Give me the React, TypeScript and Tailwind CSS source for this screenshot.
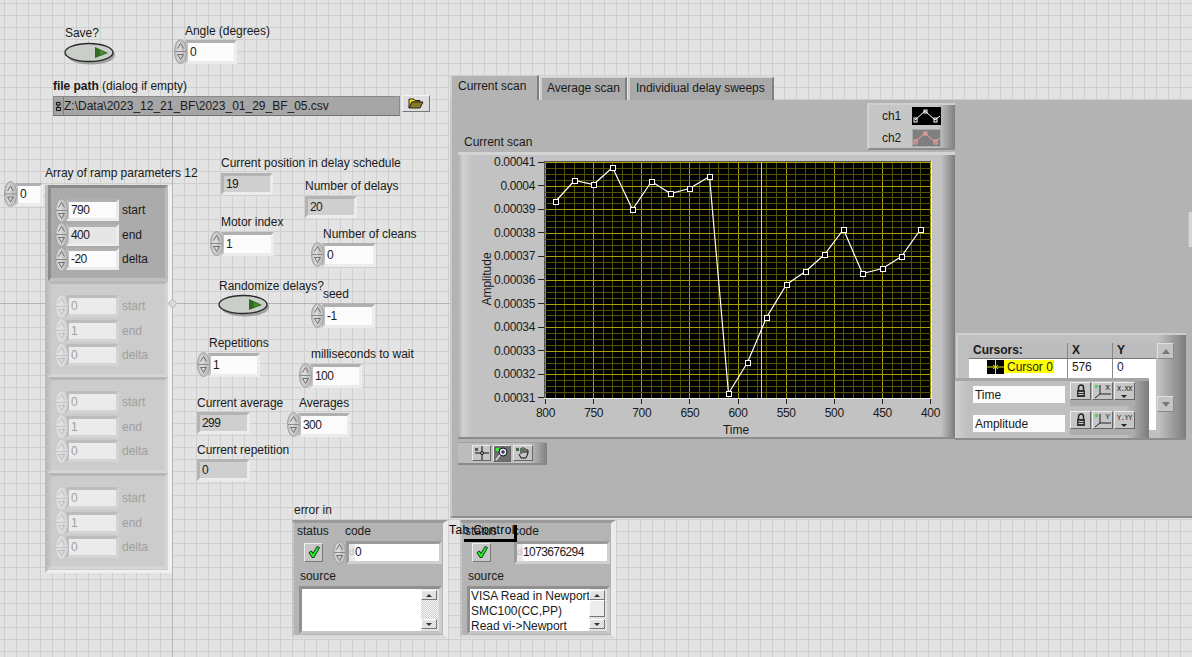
import React from "react";

const F = "font-['Liberation_Sans',sans-serif] text-[12px] leading-[14px] tracking-[-0.03px] text-[#1a1a1a] whitespace-nowrap";
const N = "font-['Liberation_Sans',sans-serif] text-[12px] leading-[14px] tracking-[-0.6px] text-[#1a1a1a] whitespace-nowrap";

/* The front panel is a free canvas: only whole controls are placed on it. */
function At({ x, y, w, h, className = "", children }: { x: number; y: number; w?: number; h?: number; className?: string; children?: React.ReactNode }) {
  return <div className={"absolute " + className} style={{ left: x, top: y, width: w, height: h }}>{children}</div>;
}

function T({ x, y, children, className = "" }: { x: number; y: number; children: React.ReactNode; className?: string }) {
  return <At x={x} y={y} className={F + " " + className}>{children}</At>;
}

function Spin({ h = 25, dim = false }: { h?: number; dim?: boolean }) {
  const s = dim ? "#bcbcbc" : "#6e6e6e";
  const m = h / 2;
  return (
    <svg width="13" height={h} viewBox={`0 0 13 ${h}`} className="shrink-0 relative z-10 -mr-[2px]">
      <ellipse cx="6.5" cy={m} rx="6" ry={m - 0.5} fill={dim ? "#dadada" : "#c4c4c4"} stroke={dim ? "#cacaca" : "#a0a0a0"} />
      <ellipse cx="5" cy={m} rx="2.5" ry={m - 3} fill={dim ? "#e2e2e2" : "#d8d8d8"} />
      <line x1="1" y1={m} x2="12" y2={m} stroke={dim ? "#c6c6c6" : "#8a8a8a"} />
      <path d={`M3.5 ${m - 3} L6.5 ${m - 8} L9.5 ${m - 3}`} stroke={s} fill="none" />
      <path d={`M3.5 ${m + 3} H9.5 L6.5 ${m + 8} Z`} stroke={s} fill="none" />
    </svg>
  );
}

type Kind = "ctrl" | "ind" | "dim" | "alt";
function Box({ w, v, kind = "ctrl", h = 24 }: { w: number; v: string; kind?: Kind; h?: number }) {
  const bg = kind === "ctrl" ? "bg-[#fbfbfb]" : kind === "ind" ? "bg-[#cfcfcf]" : kind === "alt" ? "bg-[#e6e6e6]" : "bg-[#ebebeb]";
  const fr = kind === "dim"
    ? "border-t-[#bdbdbd] border-l-[#bdbdbd] border-r-[#d4d4d4] border-b-[#d4d4d4]"
    : kind === "ind"
      ? "border-t-[#b4b4b4] border-l-[#b4b4b4] border-r-[#ececec] border-b-[#ececec]"
      : "border-t-[#b0b0b0] border-l-[#c0c0c0] border-r-[#ececec] border-b-[#ececec]";
  return (
    <div className={"border-[3px] box-border flex items-center pl-[2px] shrink-0 " + fr + " " + bg} style={{ width: w, height: h }}>
      <span className={N + (kind === "dim" ? " !text-[#a2a2a2]" : "")}>{v}</span>
    </div>
  );
}

/* label above, optional spinner + value box below */
function Ctrl({ x, y, label, dx = 0, gap = 1, v, w = 52, h = 24, spin = true, kind = "ctrl" }: { x: number; y: number; label: string; dx?: number; gap?: number; v: string; w?: number; h?: number; spin?: boolean; kind?: Kind }) {
  return (
    <At x={x} y={y} className="flex flex-col">
      <span className={F} style={{ marginLeft: dx, marginBottom: gap }}>{label}</span>
      <div className="flex items-center">
        {spin && <Spin />}
        <Box w={w} v={v} kind={kind} h={h} />
      </div>
    </At>
  );
}

function Toggle({ x, y }: { x: number; y: number }) {
  return (
    <At x={x} y={y} w={52} h={24}>
      <svg width="52" height="24" viewBox="0 0 52 24">
        <ellipse cx="27" cy="13" rx="24" ry="9.5" fill="#8a8a8a" opacity="0.75" />
        <ellipse cx="25" cy="10.5" rx="24" ry="9" fill="#c9cec9" stroke="#2a2a2a" strokeWidth="1.3" />
        <path d="M31 5 L44 11 L31 16 Z" fill="#2f6b20" />
        <path d="M36 8 L41 11 L36 13 Z" fill="#4d8a35" />
      </svg>
    </At>
  );
}

function Cluster({ vals, dim, first }: { vals: string[]; dim: boolean; first?: boolean }) {
  const names = ["start", "end", "delta"];
  const cls = first
    ? "h-[96px] bg-[#ababab] border-t-[#8c8c8c] border-l-[#8c8c8c] border-r-[#bcbcbc] border-b-[#c0c0c0]"
    : "h-[96px] bg-[#cccccc] border-t-[#b8b8b8] border-l-[#c2c2c2] border-r-[#d6d6d6] border-b-[#d6d6d6]";
  return (
    <div className={"border-[3px] box-border flex flex-col pl-[4px] pt-[10px] " + cls}>
      {vals.map((v, i) => (
        <div key={i} className="flex items-center h-[24.5px]">
          <Spin dim={dim} />
          <div className="w-[53px]"><Box w={53} h={22} v={v} kind={dim ? "dim" : i === 1 ? "alt" : "ctrl"} /></div>
          <span className={F + " ml-[3px]" + (dim ? " !text-[#a0a0a0]" : "")}>{names[i]}</span>
        </div>
      ))}
    </div>
  );
}

const pts: [number, number][] = [[555,201],[574,180],[593,184],[612,167],[632,209],[651,181],[670,193],[689,188],[709,176],[728,393],[747,362],[766,317],[786,284],[805,271],[824,254],[843,229],[862,273],[882,268],[901,256],[920,229]];

function Plot() {
  const L = 544, Tp = 161, W = 388, H = 238;
  const v: React.ReactNode[] = [];
  const h: React.ReactNode[] = [];
  for (let i = 0; i <= 40; i++) {
    const x = Math.round(1 + i * 9.625) + 0.5;
    v.push(<line key={"v" + i} x1={x} x2={x} y1={0} y2={H} stroke={i % 5 === 0 ? "#a8a000" : "#565300"} />);
    const y = Math.round(1 + i * 5.9) + 0.5;
    h.push(<line key={"h" + i} x1={0} x2={W} y1={y} y2={y} stroke={i % 4 === 0 ? "#a8a000" : "#565300"} />);
  }
  return (
    <At x={L} y={Tp} w={W} h={H} className="bg-black">
      <svg width={W} height={H} viewBox={`0 0 ${W} ${H}`} className="block">
        <g shapeRendering="crispEdges">
          {v}
          {h}
          <line x1={217.5} x2={217.5} y1={0} y2={H} stroke="#f0e000" />
          <line x1={0} x2={W} y1={0.5} y2={0.5} stroke="#555" />
          <line x1={0.5} x2={0.5} y1={0} y2={H} stroke="#555" />
          <line x1={W - 0.5} x2={W - 0.5} y1={0} y2={H} stroke="#ededed" />
          <line x1={0} x2={W} y1={H - 0.5} y2={H - 0.5} stroke="#ededed" />
        </g>
        <polyline fill="none" stroke="#fff" strokeWidth="1.2" points={pts.map(([a, b]) => `${a - L + 0.5},${b - Tp + 0.5}`).join(" ")} />
        <g shapeRendering="crispEdges">
          {pts.map(([a, b], i) => (
            <rect key={i} x={a - L - 2} y={b - Tp - 2} width="5" height="5" fill="#000" stroke="#fff" />
          ))}
        </g>
      </svg>
    </At>
  );
}

const yl = ["0.00041","0.0004","0.00039","0.00038","0.00037","0.00036","0.00035","0.00034","0.00033","0.00032","0.00031"];
const xl = ["800","750","700","650","600","550","500","450","400"];
const AX = "font-['Liberation_Sans',sans-serif] text-[12px] leading-[14px] tracking-[-0.35px] text-[#1a1a1a]";

function Axis() {
  return (
    <>
      <At x={490} y={155} w={54} h={250} className="flex flex-col justify-between">
        {yl.map((t) => (
          <div key={t} className="flex items-center justify-end h-[14px]">
            <span className={AX}>{t}</span>
            <span className="w-[6px] h-[1px] bg-[#222] ml-[3px]" />
          </div>
        ))}
      </At>
      <At x={530.5} y={399} w={415} className="flex justify-between">
        {xl.map((t) => (
          <div key={t} className="w-[30px] flex flex-col items-center">
            <span className="w-[1px] h-[5px] bg-[#222]" />
            <span className={AX + " mt-[2px]"}>{t}</span>
          </div>
        ))}
      </At>
      <T x={723} y={423}>Time</T>
      <At x={457} y={272} w={60} className={F + " text-center -rotate-90"}>Amplitude</At>
    </>
  );
}

function Check() {
  return (
    <div className="w-[19px] h-[19px] shrink-0 bg-[#c8c8c8] border border-t-[#ededed] border-l-[#ededed] border-r-[#7a7a7a] border-b-[#7a7a7a] box-border flex items-center justify-center">
      <svg width="14" height="14" viewBox="0 0 14 14">
        <path d="M2 7.5 L5 12.5 H7 L12.5 2.5 L10 1.5 L6 8.5 L4.5 6 Z" fill="#22ee22" stroke="#0a2a0a" strokeWidth="0.9" />
      </svg>
    </div>
  );
}

function Scroll({ thumb }: { thumb: boolean }) {
  const b = "w-[16px] bg-[#e2e2e2] border border-t-white border-l-white border-r-[#777] border-b-[#777] box-border flex items-center justify-center";
  return (
    <div className="w-[18px] h-[42px] pt-[1px] pb-[2px] flex flex-col justify-between bg-[repeating-conic-gradient(#cfcfcf_0_25%,#f6f6f6_0_50%)] bg-[length:2px_2px] shrink-0">
      <div className="flex flex-col">
        <div className={b + " h-[10px]"}><span className="border-x-[3px] border-x-transparent border-b-[3px] border-b-[#333]" /></div>
        {thumb && <div className={b + " h-[17px] !bg-[#ececec]"} />}
      </div>
      <div className={b + " h-[10px]"}><span className="border-x-[3px] border-x-transparent border-t-[3px] border-t-[#333]" /></div>
    </div>
  );
}

function ErrCluster({ x, code, spin, source }: { x: number; code: string; spin: boolean; source?: React.ReactNode }) {
  return (
    <At x={x} y={520} w={156} h={118} className="bg-[#b4b4b4] border-t-[3px] border-l-[2px] border-r-[5px] border-b-[3px] box-border border-t-[#9a9a9a] border-l-[#c4c4c4] border-r-[#ececec] border-b-[#dadada] px-[3px] pt-[1px] flex flex-col">
      <div className="flex h-[17px] shrink-0">
        <span className={F + " w-[48px]"}>status</span>
        <span className={F}>code</span>
      </div>
      <div className="flex items-center h-[22px] pl-[7px] shrink-0">
        <Check />
        <div className="flex items-center ml-[10px]">
          <div className="w-[13px] shrink-0">{spin && <Spin h={23} />}</div>
          <div className="h-[23px] w-[96px] border-[3px] box-border border-t-[#9a9a9a] border-l-[#9a9a9a] border-r-[#d0d0d0] border-b-[#d0d0d0] bg-white flex items-center shrink-0">
            <span className="w-[6px] shrink-0 bg-[#e8e8e8] h-full text-[#bdbdbd] text-[9px] leading-[17px] font-['Liberation_Sans',sans-serif]">d</span>
            <span className={N}>{code}</span>
          </div>
        </div>
      </div>
      <span className={F + " mt-[6px] ml-[3px] h-[17px] shrink-0"}>source</span>
      <div className="ml-[2px] -mr-[2px] flex bg-white border-[3px] box-border border-t-[#909090] border-l-[#909090] border-r-[#cfcfcf] border-b-[#c4c4c4] h-[48px] shrink-0 overflow-hidden">
        <div className={F + " flex-1 leading-[15px] overflow-hidden pl-[1px]"}>{source}</div>
        <Scroll thumb={!!source} />
      </div>
    </At>
  );
}

function Btn({ w = 21, h = 18, children, dark, className = "" }: { w?: number; h?: number; children?: React.ReactNode; dark?: boolean; className?: string }) {
  return (
    <div className={(dark ? "bg-[#6e6e6e] " : "bg-[#c6c6c6] ") + "relative border border-t-[#ececec] border-l-[#ececec] border-r-[#666] border-b-[#666] box-border flex items-center justify-center shrink-0 " + className} style={{ width: w, height: h }}>
      {children}
    </div>
  );
}

const Led = ({ on }: { on?: boolean }) => (
  <span className={"absolute left-[2px] top-[2px] w-[3px] h-[3px] " + (on ? "bg-[#33ee33]" : "bg-[#3f6b3f]")} />
);

const Lock = () => (
  <svg width="12" height="14" viewBox="0 0 12 14">
    <path d="M3.5 6 V3.5 A2.5 2.5 0 0 1 8.5 3.5 V6" fill="none" stroke="#222" strokeWidth="1.5" />
    <rect x="2" y="6" width="8" height="7" fill="#333" />
    <rect x="3.5" y="8" width="5" height="1" fill="#ccc" />
    <rect x="3.5" y="10" width="5" height="1" fill="#ccc" />
  </svg>
);

function ScaleRow({ name, axis, fmt }: { name: string; axis: string; fmt: string }) {
  return (
    <div className="flex items-start h-[29px] shrink-0">
      <div className="w-[92px] h-[17px] mt-[4px] bg-[#fbfbfb] flex items-center pl-[2px]"><span className={F}>{name}</span></div>
      <div className="flex gap-[1px] ml-[5px] bg-[#adadad] h-[24px]">
        <Btn><Lock /></Btn>
        <Btn>
          <Led on />
          <svg width="19" height="16" viewBox="0 0 19 16" className="absolute left-0 top-0">
            <path d="M7 2 V11 H18 M7 11 L2 15" fill="none" stroke="#222" />
          </svg>
          <span className="absolute right-[2px] top-0 font-['Liberation_Mono',monospace] text-[8px] leading-[10px] text-[#222]">{axis}</span>
        </Btn>
        <Btn>
          <span className="font-['Liberation_Mono',monospace] text-[7px] leading-[10px] tracking-[-0.4px] text-[#222] -mt-[5px]">{fmt}</span>
          <span className="absolute left-[6px] bottom-[1px] border-x-[3px] border-x-transparent border-t-[3px] border-t-[#222]" />
        </Btn>
      </div>
    </div>
  );
}

const tabBase = "border-l-[2px] border-t-[1px] border-r-[2px] box-border flex items-center border-l-[#cfcfcf] border-t-[#cfcfcf] border-r-[#808080] " + F;

export default function App() {
  return (
    <div className="relative w-[1192px] h-[657px] overflow-hidden bg-[#e3e3e3] bg-[linear-gradient(#cfcfcf_1px,transparent_1px),linear-gradient(90deg,#cfcfcf_1px,transparent_1px)] bg-[length:12px_12px] bg-[position:4px_3px]">
      <At x={172} y={0} w={1} h={657} className="bg-[#b4b4b4]" />
      <At x={0} y={303} w={450} h={1} className="bg-[#b4b4b4]" />

      <T x={65} y={26}>Save?</T>
      <Toggle x={64} y={42} />
      <Ctrl x={174} y={24} dx={11} label="Angle (degrees)" v="0" />

      {/* file path */}
      <At x={53} y={79} className="flex flex-col">
        <span className={F + " mb-[3px]"}><b className="font-bold">file path</b> (dialog if empty)</span>
        <div className="flex items-start">
          <div className="w-[347px] h-[20px] bg-[#a6a6a6] border border-[#8a8a8a] border-b-[#707070] box-border flex items-center">
            <svg width="9" height="12" viewBox="0 0 9 12" className="shrink-0 bg-[#9e9e9e]">
              <path d="M2.5 2.5 H6 V5 H2.5 Z M4 5 V7.5 M2.5 7.5 H6.5 V10.5 H2.5 Z" fill="none" stroke="#111" />
            </svg>
            <span className={N + " !tracking-[0px] border-l border-[#808080] h-full leading-[18px]"}>Z:\Data\2023_12_21_BF\2023_01_29_BF_05.csv</span>
          </div>
          <div className="ml-[2px] -mt-[1px] w-[28px] h-[17px] bg-[#dedede] border border-t-[#f4f4f4] border-l-[#f4f4f4] border-r-[#777] border-b-[#777] box-border flex items-center justify-center">
            <svg width="16" height="11" viewBox="0 0 16 11">
              <path d="M1 1 H6 L7 2.5 H12 V4 H4 L1 10 Z" fill="#f0e000" stroke="#222" />
              <path d="M4 4 H15 L12 10 H1 Z" fill="#8a7a20" stroke="#222" />
            </svg>
          </div>
        </div>
      </At>

      {/* array */}
      <T x={45} y={166}>Array of ramp parameters 12</T>
      <At x={4} y={181} className="flex items-center">
        <Spin h={26} />
        <Box w={28} h={23} v="0" />
      </At>
      <At x={45} y={185} w={127} h={388} className="bg-[#cccccc] border-l-[3px] border-r-[4px] border-b-[3px] box-border border-l-[#bcbcbc] border-r-[#f0f0f0] border-b-[#f0f0f0] flex flex-col">
        <Cluster first vals={["790", "400", "-20"]} dim={false} />
        <Cluster vals={["0", "1", "0"]} dim />
        <Cluster vals={["0", "1", "0"]} dim />
        <Cluster vals={["0", "1", "0"]} dim />
      </At>
      <At x={169} y={300} w={7} h={7} className="rotate-45 bg-[#dcdcdc] border border-[#bdbdbd]" />

      {/* scattered controls */}
      <Ctrl x={221} y={156} label="Current position in delay schedule" v="19" spin={false} kind="ind" w={52} h={22} gap={3} />
      <Ctrl x={305} y={179} label="Number of delays" v="20" spin={false} kind="ind" w={52} h={22} gap={3} />
      <Ctrl x={210} y={215} dx={11} label="Motor index" v="1" w={53} gap={2} />
      <Ctrl x={311} y={227} dx={12} label="Number of cleans" v="0" w={54} />
      <T x={219} y={279}>Randomize delays?</T>
      <Toggle x={218} y={294} />
      <Ctrl x={311} y={287} dx={12} label="seed" v="-1" w={53} gap={2} />
      <Ctrl x={197} y={336} dx={12} label="Repetitions" v="1" w={52} gap={2} />
      <Ctrl x={299} y={347} dx={12} label="milliseconds to wait" v="100" w={52} gap={2} />
      <Ctrl x={197} y={396} label="Current average" v="299" spin={false} kind="ind" w={53} h={22} gap={2} />
      <Ctrl x={287} y={396} dx={12} label="Averages" v="300" w={52} gap={2} />
      <Ctrl x={197} y={443} label="Current repetition" v="0" spin={false} kind="ind" w={53} h={22} gap={2} />

      {/* tab control */}
      <At x={450} y={75} w={742} className="flex flex-col">
        <div className="flex items-end h-[25px] -mb-[1px] relative z-10">
          <div className={tabBase + " h-[25px] w-[89px] bg-[#b3b3b3] pl-[6px] pb-[5px] !border-r-[#808080]"}>Current scan</div>
          <div className={tabBase + " h-[23px] w-[87px] ml-[1px] bg-[#a9a9a9] pl-[5px] pb-[2px]"}>Average scan</div>
          <div className={tabBase + " h-[23px] w-[146px] ml-[1px] bg-[#a9a9a9] pl-[6px] pb-[2px]"}>Individiual delay sweeps</div>
        </div>
        <div className="h-[419px] bg-[#b3b3b3] border-l-[2px] border-t-[1px] border-b-[2px] box-border border-l-[#c8c8c8] border-t-[#cdcdcd] border-b-[#8f8f8f]" />
      </At>

      <T x={464} y={135}>Current scan</T>

      {/* graph */}
      <At x={458} y={152} w={497} h={287} className="border-t-[3px] border-t-[#d4d4d4] border-b-[2px] border-b-[#8c8c8c] box-border bg-[#c2c2c2] bg-[linear-gradient(90deg,#b0b0b0_0,#d2d2d2_5px,#c2c2c2_14px,#c2c2c2_calc(100%-14px),#7c7c7c_100%)]" />
      <Plot />
      <Axis />

      {/* plot legend */}
      <At x={867} y={103} w={88} h={47} className="grid grid-cols-[1fr_29px] grid-rows-2 items-center gap-y-[3px] pl-[13px] pr-[14px] py-[1px] box-border border-t-[2px] border-t-[#d0d0d0] border-b-[2px] border-b-[#8c8c8c] border-l-[2px] border-l-[#d2d2d2] bg-[linear-gradient(90deg,#c6c6c6,#c6c6c6_80%,#808080)]">
        <span className={F}>ch1</span>
        <div className="w-[29px] h-[18px] bg-black">
          <svg width="29" height="18" className="block"><polyline points="3,13 13,4 23,13 28,9" fill="none" stroke="#fff" /><rect x="2" y="11" width="3" height="4" fill="none" stroke="#fff" /><rect x="12" y="3" width="3" height="3" fill="none" stroke="#fff" /><rect x="22" y="11" width="3" height="4" fill="none" stroke="#fff" /></svg>
        </div>
        <span className={F}>ch2</span>
        <div className="w-[29px] h-[18px] bg-[#7f7f7f] border border-[#aaa] box-border">
          <svg width="27" height="16" className="block"><polyline points="2,12 12,3 22,12 27,8" fill="none" stroke="#f0a0a0" /><rect x="1" y="10" width="3" height="4" fill="none" stroke="#f0a0a0" /><rect x="11" y="2" width="3" height="3" fill="none" stroke="#f0a0a0" /><rect x="21" y="10" width="3" height="4" fill="none" stroke="#f0a0a0" /></svg>
        </div>
      </At>

      {/* graph palette */}
      <At x={458} y={442} w={89} h={23} className="flex items-start gap-[2px] pl-[14px] pt-[2px] box-border bg-[linear-gradient(90deg,#bcbcbc,#c2c2c2_80%,#808080)] border-b-[2px] border-b-[#8a8a8a] border-t-[1px] border-t-[#a0a0a0]">
        <Btn w={19} h={16}><Led /><svg width="16" height="14"><path d="M8 0 V14 M1 7 H15" stroke="#111" /><circle cx="8" cy="7" r="1.5" fill="#c6c6c6" stroke="#111" /></svg></Btn>
        <Btn w={18} h={17} dark><Led on /><svg width="16" height="14"><circle cx="9" cy="5" r="4" fill="#dfe0ff" stroke="#111" /><path d="M7 5 H11 M9 3 V7" stroke="#111" /><path d="M6 8 L2 13" stroke="#ddd" strokeWidth="1.5" /></svg></Btn>
        <Btn w={20} h={16}><Led /><svg width="14" height="14"><path d="M3 8 L5 12 H10 L12 7 V4 M5 8 V2 M7 7 V1 M9 7 V2 M11 7 V3" fill="none" stroke="#111" /></svg></Btn>
      </At>

      <At x={1188} y={212} w={4} h={35} className="bg-[#d6d6d6] border-l border-[#c0c0c0]" />

      {/* cursor legend */}
      <At x={956} y={333} w={230} h={107} className="pl-[11px] pt-[8px] box-border border-t-[2px] border-t-[#cfcfcf] border-l-[2px] border-l-[#cfcfcf] border-b-[2px] border-b-[#8c8c8c] bg-[linear-gradient(90deg,#c0c0c0,#c0c0c0_88%,#7c7c7c)]">
        <div className="flex">
          <div className="w-[187px] flex flex-col">
            <div className="grid grid-cols-[98px_45px_44px] h-[16px] bg-[#bcbcbc] border-b border-[#777]">
              <span className={F + " font-bold pl-[4px]"}>Cursors:</span>
              <span className={F + " font-bold pl-[4px] border-l border-[#888]"}>X</span>
              <span className={F + " font-bold pl-[4px] border-l border-[#888]"}>Y</span>
            </div>
            <div className="grid grid-cols-[98px_45px_44px] h-[71px] bg-white">
              <div className="flex items-start pt-[1px] pl-[18px] h-[15px]">
                <span className="w-[17px] h-[14px] bg-black flex items-center justify-center shrink-0">
                  <svg width="17" height="14"><path d="M0 7 H17 M8.5 0 V14" stroke="#e8e800" /><path d="M6 5 L11 9 M11 5 L6 9" stroke="#e8e800" /></svg>
                </span>
                <span className={F + " bg-[#ffff00] h-[13px] leading-[13px] pl-[3px] pr-[1px]"}>Cursor 0</span>
              </div>
              <span className={N + " border-l border-[#888] pl-[4px] !tracking-[-0.2px] pt-[1px]"}>576</span>
              <span className={N + " border-l border-[#888] pl-[4px] pt-[1px]"}>0</span>
            </div>
          </div>
          <div className="w-[17px] ml-[1px] h-[70px] flex flex-col justify-between">
            <div className="h-[16px] bg-[#c4c4c4] border border-t-[#dedede] border-l-[#dedede] border-r-[#888] border-b-[#888] box-border flex items-center justify-center"><span className="border-x-[4px] border-x-transparent border-b-[5px] border-b-[#777]" /></div>
            <div className="h-[16px] mb-[1px] bg-[#c4c4c4] border border-t-[#dedede] border-l-[#dedede] border-r-[#888] border-b-[#888] box-border flex items-center justify-center"><span className="border-x-[4px] border-x-transparent border-t-[5px] border-t-[#777]" /></div>
          </div>
        </div>
      </At>
      <At x={955} y={378} w={194} h={62} className="pl-[18px] pt-[1px] box-border border-t-[3px] border-t-[#a6a6a6] border-b-[2px] border-b-[#8c8c8c] bg-[linear-gradient(90deg,#d0d0d0,#bfbfbf_12px,#bfbfbf_88%,#7c7c7c)] flex flex-col overflow-hidden">
        <ScaleRow name="Time" axis="X" fmt="X.XX" />
        <ScaleRow name="Amplitude" axis="Y" fmt="Y.YY" />
      </At>

      {/* error clusters */}
      <T x={294} y={503}>error in</T>
      <ErrCluster x={292} code="0" spin />
      <ErrCluster x={460} code="1073676294" spin={false}
        source={<>VISA Read in Newport<br />SMC100(CC,PP)<br />Read vi-&gt;Newport</>} />
      <T x={449} y={523} className="text-black !tracking-[0.4px]">Tab Control</T>
      <At x={464} y={525} w={53} h={17} className="border-b-[3px] border-r-[3px] border-black box-border" />
    </div>
  );
}
